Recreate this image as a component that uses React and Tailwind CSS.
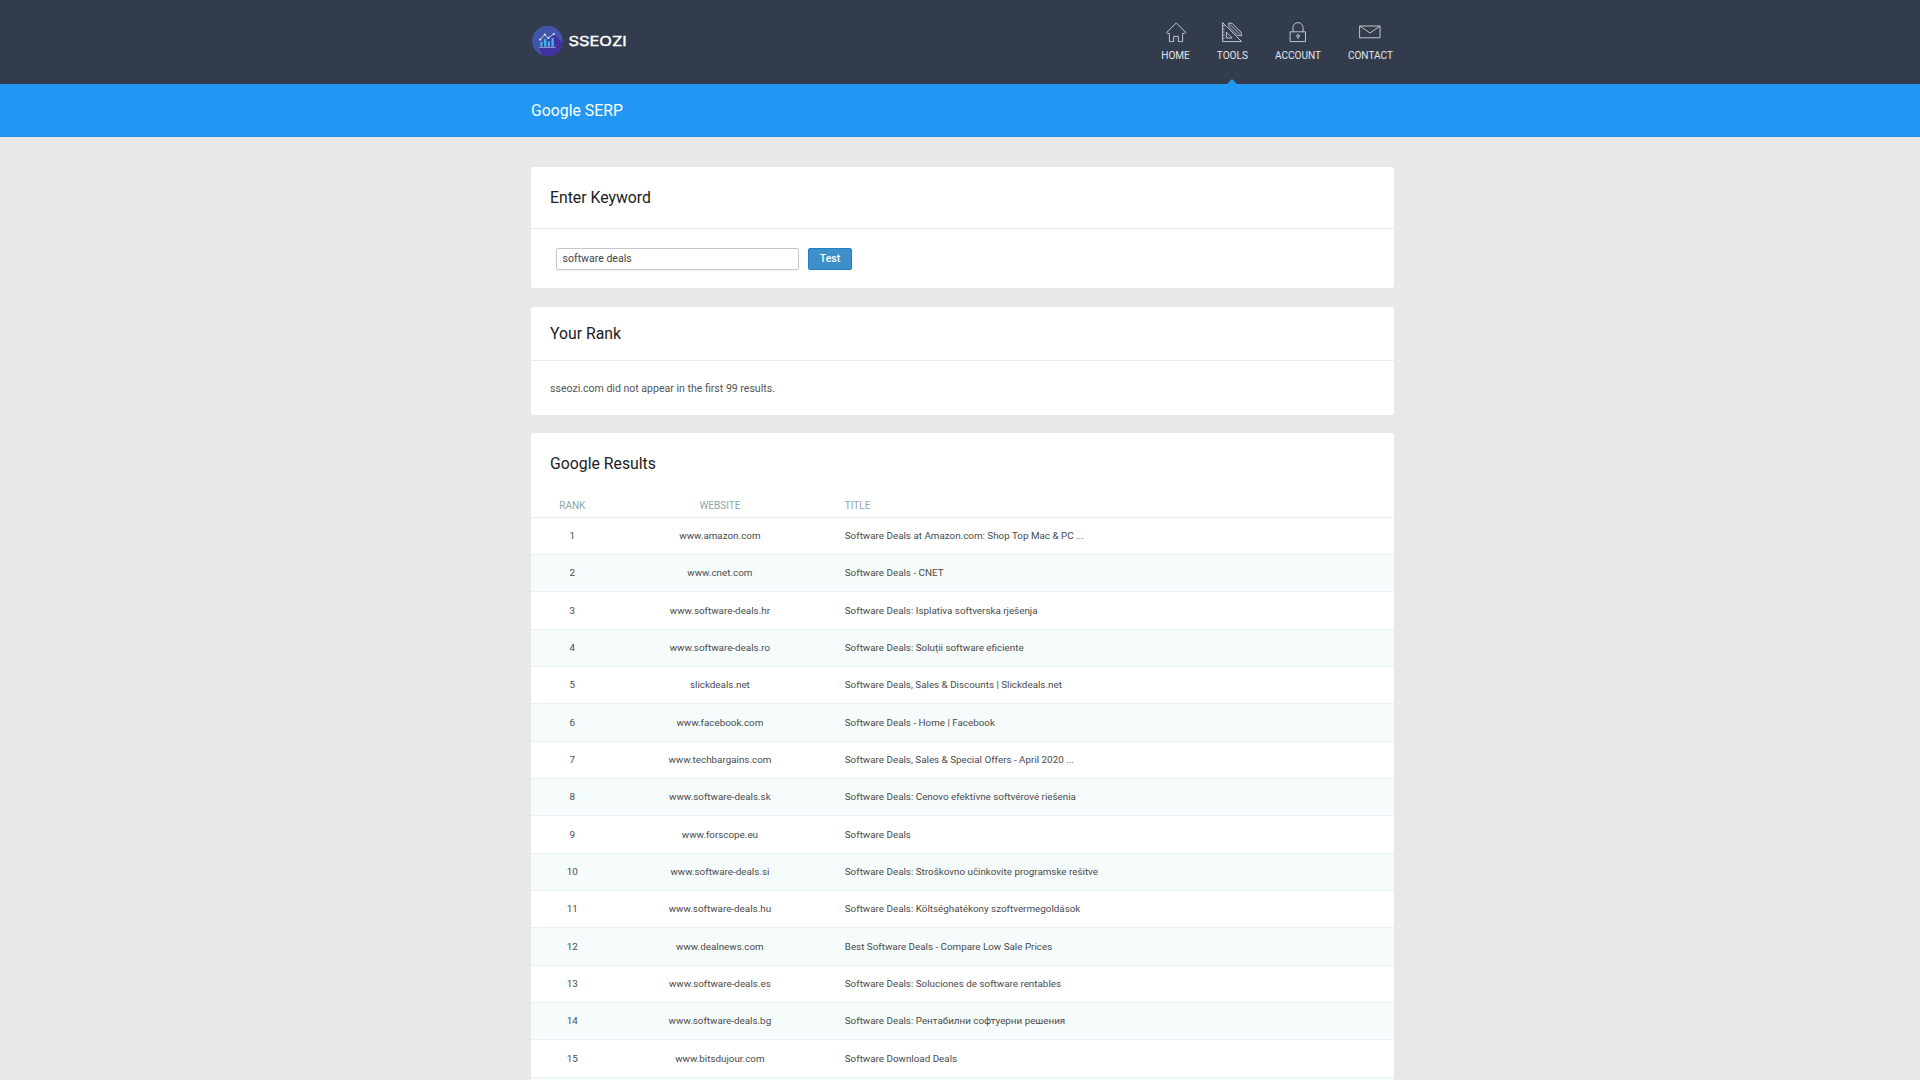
import React, {useState} from 'react'


const results = [
    {website: "www.amazon.com", title: "Software Deals at Amazon.com: Shop Top Mac & PC ..."},
    {website: "www.cnet.com", title: "Software Deals - CNET"},
    {website: "www.software-deals.hr", title: "Software Deals: Isplativa softverska rješenja"},
    {website: "www.software-deals.ro", title: "Software Deals: Soluții software eficiente"},
    {website: "slickdeals.net", title: "Software Deals, Sales & Discounts | Slickdeals.net"},
    {website: "www.facebook.com", title: "Software Deals - Home | Facebook"},
    {website: "www.techbargains.com", title: "Software Deals, Sales & Special Offers - April 2020 ..."},
    {website: "www.software-deals.sk", title: "Software Deals: Cenovo efektívne softvérové riešenia"},
    {website: "www.forscope.eu", title: "Software Deals"},
    {website: "www.software-deals.si", title: "Software Deals: Stroškovno učinkovite programske rešitve"},
    {website: "www.software-deals.hu", title: "Software Deals: Költséghatékony szoftvermegoldások"},
    {website: "www.dealnews.com", title: "Best Software Deals - Compare Low Sale Prices"},
    {website: "www.software-deals.es", title: "Software Deals: Soluciones de software rentables"},
    {website: "www.software-deals.bg", title: "Software Deals: Рентабилни софтуерни решения"},
    {website: "www.bitsdujour.com", title: "Software Download Deals"},
]

function Icon({children}) {
    return (
        <svg className="w-[22px] h-[22px]" viewBox="0 0 22 22" fill="none" stroke="#c3c7cc" strokeWidth="1" strokeLinejoin="round" strokeLinecap="round">
            {children}
        </svg>
    )
}

const menu = [
    {
        label: "HOME",
        icon: <Icon><path d="M11 2.2 L1.5 11.7 L2.6 12.5 H4.4 V20.6 H8.7 V15.3 H13.3 V20.6 H17.6 V12.5 H19.4 L20.5 11.7 Z"/></Icon>
    },
    {
        label: "TOOLS",
        active: true,
        icon: <Icon>
            <path d="M1.6 2 V20.6 H20.2 Z"/>
            <path d="M5.4 11.6 V17 H10.8 Z"/>
            <path d="M1.6 5 H3.2 M1.6 8 H3.2 M1.6 11 H3.2 M1.6 14 H3.2 M1.6 17 H3.2"/>
            <path d="M8.1 5.5 L7.6 2 L11.2 2.4 L20 11.2 L20.6 14.8 L17 14.4 Z M9.6 4 L18.4 12.8"/>
        </Icon>
    },
    {
        label: "ACCOUNT",
        icon: <Icon>
            <path d="M3.5 10.8 H18.5 V20.6 H3.5 Z"/>
            <path d="M6 10.8 V6.6 a5 5 0 0 1 10 0 V10.8"/>
            <circle cx="11" cy="14.8" r="1.3"/>
            <path d="M11 16.2 V17.6"/>
        </Icon>
    },
    {
        label: "CONTACT",
        icon: <Icon>
            <path d="M1 5 H21 V16.8 H1 Z"/>
            <path d="M1.2 5.2 L11 12 L20.8 5.2"/>
        </Icon>
    },
]

function Logo() {
    return (
        <svg className="w-[98px] h-8" viewBox="0 0 98 32">
            <defs>
                <linearGradient id="disc" x1="0" y1="0" x2="1" y2="1">
                    <stop offset="0" stopColor="#3d5ba6"/>
                    <stop offset="1" stopColor="#4a4ab0"/>
                </linearGradient>
            </defs>
            <circle cx="16.5" cy="16" r="15.3" fill="url(#disc)"/>
            <path d="M23 9.5 L31.6 18 A15.3 15.3 0 0 1 18 31.2 Q13.5 31.4 11 30 L8 22 Z" fill="#42329f"/>
            <path d="M9.3 17.3 h2.4 v4.3 h-2.4 Z M13 14.2 h2.4 v7.4 h-2.4 Z M16.7 16.2 h2.4 v5.4 h-2.4 Z M20.4 13 h2.4 v8.6 h-2.4 Z" fill="#38b6ec"/>
            <path d="M8 22.3 H24.5" stroke="#9fb8e0" strokeWidth="0.9"/>
            <path d="M9.2 14.6 L13.8 9.6 L17.4 13 L22.6 9.1" fill="none" stroke="#c9d3ee" strokeWidth="0.9"/>
            <circle cx="9.2" cy="14.6" r="1.1" fill="#dfe5f5"/>
            <circle cx="13.8" cy="9.6" r="1.1" fill="#dfe5f5"/>
            <circle cx="17.4" cy="13" r="1.1" fill="#dfe5f5"/>
            <circle cx="22.8" cy="9" r="1.1" fill="#dfe5f5"/>
            <g transform="translate(37.4 21.4) scale(1.3 1)">
                <text className="font-['Inter',sans-serif] font-normal" fontSize="13.4" fill="#ffffff" stroke="#ffffff" strokeWidth="0.4" textLength="44.8" lengthAdjust="spacingAndGlyphs">SSEOZI</text>
            </g>
        </svg>
    )
}

function App() {
    const [keyword, setKeyword] = useState("software deals");

    return (
        <div className="h-screen overflow-hidden bg-[#e8e8e8] font-['Roboto',sans-serif] text-[10.55px] text-[#555555]">
            <header className="h-[84px] bg-[#323c4c] border-b border-[#3b3d45]">
                <div className="w-[862.5px] ml-[531px] flex flex-row justify-between">
                    <div className="pt-[25px]"><Logo/></div>
                    <nav className="flex flex-row gap-[27px] pr-[0.6px] h-[83px]">
                        {menu.map(item => (
                            <a key={item.label} className="relative flex flex-col items-center pt-[21px] text-[10.05px] leading-3 text-[#e4e6e9] cursor-pointer">
                                {item.icon}
                                <span className="mt-[7px]">{item.label}</span>
                                {item.active ? (
                                    <span className="absolute bottom-[-1px] left-1/2 -translate-x-1/2 border-x-5 border-b-5 border-x-transparent border-b-[#2196f3]"></span>
                                ) : null}
                            </a>
                        ))}
                    </nav>
                </div>
            </header>
            <div className="h-[52.5px] bg-[#2196f3] border-b border-[#2489dc]">
                <h1 className="ml-[531px] pt-px text-[15.8px] leading-[52px] text-white">Google SERP</h1>
            </div>

            <main className="w-[862.5px] ml-[531px] pt-[30.5px]">
                <section className="h-[121px] bg-white rounded-[3px]">
                    <div className="h-[61.5px] px-[19px] pt-px flex items-center border-b border-[#e8eef0]">
                        <h2 className="text-[15.8px] text-[#212121]">Enter Keyword</h2>
                    </div>
                    <div className="flex flex-row gap-[9px] pl-[25px] pt-[19.5px]">
                        <input className="w-[243px] h-[21.5px] px-[5.5px] border border-[#c4c6c8] rounded-xs outline-0 text-[#444444] shadow-xs" value={keyword} onChange={e => setKeyword(e.target.value)}/>
                        <button className="w-[44px] h-[21.5px] pt-px bg-[#3d8fc9] border border-[#2080c4] rounded-xs text-white font-medium">Test</button>
                    </div>
                </section>

                <section className="h-[107.5px] mt-[19px] bg-white rounded-[3px]">
                    <div className="h-[54px] px-[19px] flex items-center border-b border-[#e8eef0]">
                        <h2 className="text-[15.8px] text-[#212121]">Your Rank</h2>
                    </div>
                    <p className="px-[19px] pt-px leading-[53px]">sseozi.com did not appear in the first 99 results.</p>
                </section>

                <section className="mt-[18.5px] bg-white rounded-t-[3px] text-[9.84px] text-[#4a4a4a]">
                    <h2 className="px-[19px] h-[61px] leading-[61px] text-[15.8px] text-[#212121]">Google Results</h2>
                    <div className="grid grid-cols-[82.6px_212.6px_1fr] items-center h-[23.7px] pt-px border-b border-[#e8eff1] text-[10.03px] text-[#90a4ae]">
                        <span className="text-center">RANK</span>
                        <span className="text-center">WEBSITE</span>
                        <span className="pl-[18.6px]">TITLE</span>
                    </div>
                    <div>
                        {results.map((r, i) => (
                            <div key={r.website} className="grid grid-cols-[82.6px_212.6px_1fr] items-center h-[37.33px] pt-[1px] border-b border-[#e9f0f1] even:bg-[#f6fcfc]">
                                <span className="text-center">{i + 1}</span>
                                <span className="text-center">{r.website}</span>
                                <span className="pl-[18.6px]">{r.title}</span>
                            </div>
                        ))}
                    </div>
                    <div className="h-4 bg-[#f6fcfc]"></div>
                </section>
            </main>
        </div>
    )
}

export default App
